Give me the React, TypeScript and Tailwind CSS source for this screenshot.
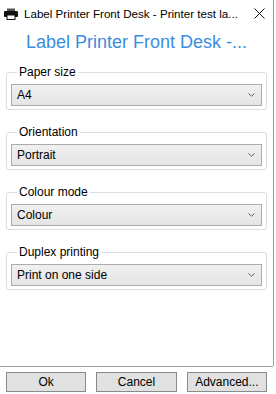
import { ReactNode } from "react";

const font = { fontFamily: '"Liberation Sans", Arial, sans-serif' };

const groups = [
  { label: "Paper size", value: "A4" },
  { label: "Orientation", value: "Portrait" },
  { label: "Colour mode", value: "Colour" },
  { label: "Duplex printing", value: "Print on one side" },
];

const PrinterIcon = () => (
  <svg width="14" height="12" viewBox="0 0 14 12">
    <rect x="3" y="0.5" width="8" height="2.5" fill="#555" />
    <rect x="0" y="3" width="14" height="6" rx="1" fill="#111" />
    <rect x="3" y="7" width="8" height="4.5" fill="#fff" stroke="#111" />
  </svg>
);

const CloseIcon = () => (
  <svg width="11" height="11" viewBox="0 0 11 11">
    <path d="M0.5 0.5 L10.5 10.5 M10.5 0.5 L0.5 10.5" stroke="#111" strokeWidth="1" />
  </svg>
);

const Chevron = () => (
  <svg width="7" height="4" viewBox="0 0 7 4">
    <path d="M0.5 0.5 L3.5 3.2 L6.5 0.5" fill="none" stroke="#606060" strokeWidth="1" />
  </svg>
);

const Group = ({ label, children }: { label: string; children: ReactNode }) => (
  <fieldset className="mx-[6px] rounded-[3px] border border-[#d5dfe5] px-[4px] pb-[3px]">
    <legend className="ml-[6px] px-[2px] text-[12px] leading-[15px] text-black">{label}</legend>
    <div className="mt-[4px]">{children}</div>
  </fieldset>
);

const Combo = ({ value }: { value: string }) => (
  <div className="flex h-[22px] items-center justify-between border border-[#acacac] bg-gradient-to-b from-[#f0f0f0] to-[#e5e5e5] pl-[5px] pr-[6px] text-[12px] text-black">
    <span>{value}</span>
    <Chevron />
  </div>
);

const Btn = ({ children }: { children: ReactNode }) => (
  <button className="h-[20px] border border-[#8a8a8a] bg-[#e1e1e1] text-[12px] leading-none text-black">
    {children}
  </button>
);

export default function App() {
  return (
    <div className="flex h-[394px] w-[276px] bg-white" style={font}>
      <div className="flex w-[273px] flex-col">
        <div className="flex h-[27px] items-center pl-[4px] pr-[8px]">
          <PrinterIcon />
          <span className="ml-[6px] flex-1 truncate text-[11.6px] text-black">
            Label Printer Front Desk - Printer test la...
          </span>
          <CloseIcon />
        </div>
        <div className="flex h-[30px] items-center justify-center text-[18px] text-[#3b8de0]">
          Label Printer Front Desk -...
        </div>
        <div className="flex flex-1 flex-col gap-[15px] pt-[8px]">
          {groups.map((g) => (
            <Group key={g.label} label={g.label}>
              <Combo value={g.value} />
            </Group>
          ))}
        </div>
        <div className="grid h-[28px] grid-cols-3 gap-[10px] border-t border-[#a0a0a0] px-[6px] pt-[5px]">
          <Btn>Ok</Btn>
          <Btn>Cancel</Btn>
          <Btn>Advanced...</Btn>
        </div>
      </div>
      <div className="h-[366px] w-px bg-[#a0a0a0]" />
    </div>
  );
}
